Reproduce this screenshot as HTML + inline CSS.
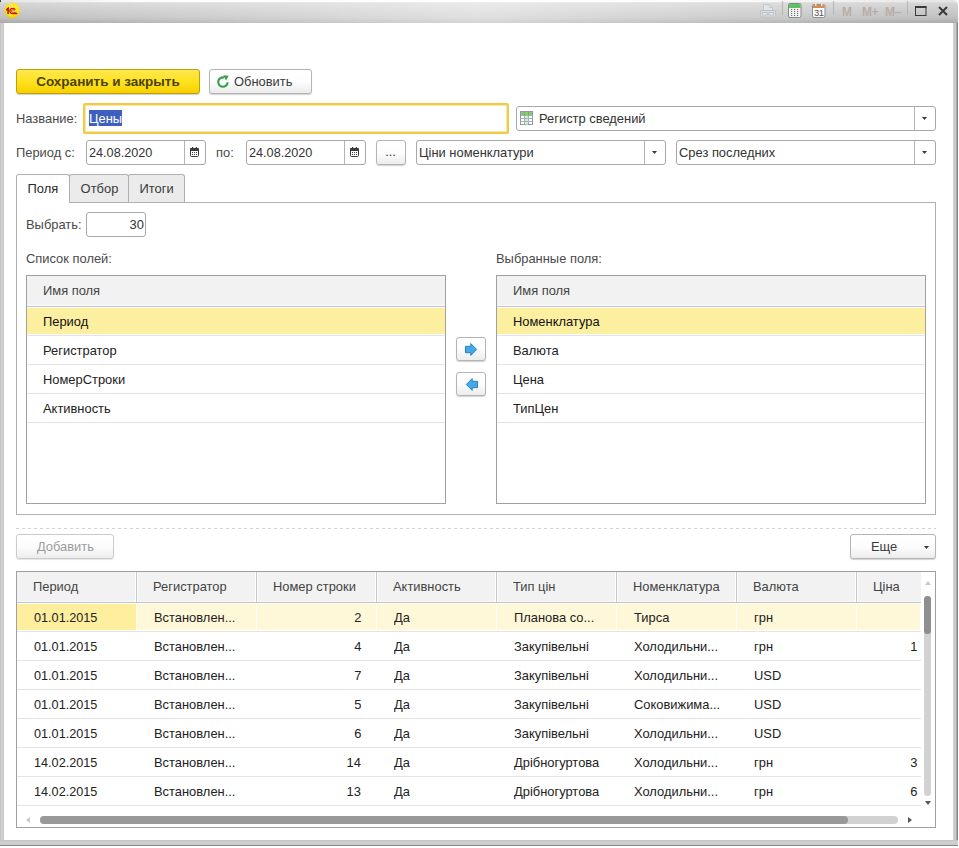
<!DOCTYPE html>
<html>
<head>
<meta charset="utf-8">
<style>
*{box-sizing:border-box;margin:0;padding:0}
html,body{width:959px;height:848px;overflow:hidden;background:#fff}
body{position:relative;font-family:"Liberation Sans",sans-serif;font-size:13.33px;color:#3a3a3a;line-height:16px}
.abs{position:absolute}
.t{display:inline-block;transform:scaleX(0.968);transform-origin:0 0;white-space:nowrap}
.t.n{transform:scaleX(.95)}
.r>.t{transform-origin:100% 0}
.c>.t{transform-origin:50% 0}
#titlebar{left:0;top:0;width:958px;height:23px;background:linear-gradient(90deg,rgba(255,255,255,0) 0,rgba(255,255,255,.5) 50%,rgba(255,255,255,.12) 85%,rgba(255,255,255,0) 100%),linear-gradient(#e4e4e4 0,#e2e2e2 2px,#d6d6d6 3px,#bfbfbf 18px,#b2b2b2 21px,#aaa 23px);border-top-right-radius:5px}
#tstrip{left:1px;top:0;width:954px;height:2px;background:linear-gradient(90deg,rgba(255,255,255,0) 0,rgba(255,255,255,.9) 14%,#fff 50%,rgba(255,255,255,.85) 76%,rgba(255,255,255,0) 100%)}
#bl{left:0;top:23px;width:4px;height:823px;background:linear-gradient(90deg,#c2c2c2,#cfcfcf 1.5px,#d0d0d0 3px,#c2c2c2 4px)}
#br{left:953px;top:23px;width:5px;height:823px;background:linear-gradient(90deg,#d2d2d2,#c6c6c6 3px,#8e8e8e 4px,#7c7c7c)}
#bb{left:0;top:840px;width:958px;height:6px;background:linear-gradient(#bebebe,#cecece 1.5px,#cdcdcd 4.5px,#8c8c8c 5px,#7e7e7e)}
.tsep{width:1px;height:14px;top:1px;background:#b6b6b6}
.mem{top:4px;font-weight:bold;font-size:12px;color:#b9ada6;letter-spacing:-0.5px}
.btn{border:1px solid #b4b4b4;border-radius:3px;background:linear-gradient(#ffffff,#fdfdfd 50%,#ececec);box-shadow:0 1px 1px rgba(0,0,0,.18);height:25px;text-align:center;line-height:23px;color:#3a3a3a;white-space:nowrap}
.btn.dis{color:#9c9c9c;border-color:#cbcbcb;box-shadow:0 1px 1px rgba(0,0,0,.10)}
#save{left:16px;top:69px;width:184px;background:linear-gradient(#ffe84f,#ffe21f 50%,#f6d000);border-color:#bd9f0a;color:#4a4205;font-weight:bold}
#save .t{transform:none;font-size:13.5px}
.inp{border:1px solid #a8a8a8;border-radius:3px;background:#fff;height:25px;line-height:23px;padding-left:2px;color:#333;white-space:nowrap;overflow:hidden}
.inp .dd{position:absolute;right:0;top:0;width:21px;height:23px;border-left:1px solid #b4b4b4}
.arr{position:absolute;width:5px;height:3px;background:#3a3a3a;clip-path:polygon(0 0,100% 0,50% 100%)}
.lbl{white-space:nowrap;color:#4a4a4a}
.tab{top:174px;height:29px;border:1px solid #b0b0b0;border-bottom:none;border-radius:3px 3px 0 0;background:#ebebeb;line-height:27px;text-align:center;color:#3a3a3a}
.tab.act{background:#fff;color:#2a2a2a}
.list{border:1px solid #a0a0a0;background:#fff;overflow:hidden}
.lh{position:absolute;left:0;top:0;right:0;height:31px;background:linear-gradient(#f2f2f2 29px,#fbfbfb 29px);border-bottom:1px solid #c4c4c4;line-height:30px;padding-left:16px;color:#444}
.lr{position:absolute;left:0;right:0;height:29px;border-bottom:1px solid #e4e4e4;line-height:29px;padding-left:16px;color:#222}
.lr.sel{color:#111}
.lr.sel:before{content:"";position:absolute;left:0;right:0;top:1px;height:26px;background:#fcefa0;z-index:0}
.lr .t{position:relative}
#grid{left:16px;top:571px;width:920px;height:257px;border:1px solid #a0a0a0;background:#fff;overflow:hidden}
.th{position:absolute;top:0;height:30px;background:linear-gradient(#f2f2f2 29px,#f9f9f9 29px);line-height:30px;padding-left:16px;color:#444;white-space:nowrap;overflow:hidden}
.vs{position:absolute;top:0;width:3px;height:30px;background:#fff}
.vs:after{content:"";position:absolute;left:1px;top:0;width:1px;height:30px;background:#c8c8c8}
.tr{position:absolute;left:0;width:904px;height:29px;border-bottom:1px solid #e4e4e4}
.td{position:absolute;top:0;height:29px;width:120px;line-height:29px;padding-left:17px;color:#222;white-space:nowrap;overflow:hidden}
.td.r{text-align:right;padding-left:0;padding-right:16px}
.selbg{position:absolute;top:1px;height:26px;background:#fff8d8}
</style>
</head>
<body>
<div class="abs" id="titlebar"></div>
<div class="abs" id="tstrip"></div>
<div class="abs" id="bl"></div>
<div class="abs" id="br"></div>
<div class="abs" id="bb"></div>
<div class="abs" style="left:0;top:0;width:1px;height:2px;background:#444"></div>

<svg class="abs" style="left:4px;top:2px" width="17" height="17" viewBox="0 0 17 17">
 <defs><radialGradient id="lg" cx="50%" cy="40%" r="60%"><stop offset="0" stop-color="#fff06a"/><stop offset=".7" stop-color="#ffe21a"/><stop offset="1" stop-color="#e8c020"/></radialGradient></defs>
 <circle cx="8.2" cy="8.6" r="7.8" fill="url(#lg)"/>
 <path d="M2.2 8 L4.1 6.5 V12" fill="none" stroke="#b5120c" stroke-width="1.6"/>
 <path d="M11.3 7.7 A2.9 2.6 0 1 0 8.9 11.6 H13.3" fill="none" stroke="#c8140c" stroke-width="1.3"/>
 <path d="M10.6 8.8 A1.6 1.3 0 1 0 9.3 10.3 H12.6" fill="none" stroke="#d02a10" stroke-width=".9"/>
</svg>

<svg class="abs" style="left:759px;top:3px" width="18" height="16" viewBox="0 0 18 16">
 <path d="M4.5 7 V1.5 H10.5 L13.5 4.5 V7" fill="#e2e5e8" stroke="#bfc5ca" stroke-width="1"/>
 <path d="M10.5 1.5 V4.5 H13.5" fill="none" stroke="#c3c8cc" stroke-width=".8"/>
 <rect x="1.5" y="7.5" width="15" height="6.5" rx="1.5" fill="#d8dcdf" stroke="#bcc2c7"/>
 <rect x="3.5" y="9.5" width="4.5" height="2.5" fill="#e4e7ea" stroke="#b9bfc4" stroke-width=".8"/>
 <rect x="10" y="9.5" width="4.5" height="2.5" fill="#e4e7ea" stroke="#b9bfc4" stroke-width=".8"/>
 <path d="M8 10.8 H10" stroke="#b9bfc4" stroke-width=".8"/>
</svg>
<div class="abs tsep" style="left:782px"></div>
<svg class="abs" style="left:788px;top:3px" width="14" height="15" viewBox="0 0 14 15">
 <rect x=".5" y=".5" width="12.5" height="14" rx="1.5" fill="#f4f6f6" stroke="#7f8c8c"/>
 <path d="M1 1.8 Q1 1 2 1 H11.5 Q12.5 1 12.5 1.8 V5 H1 Z" fill="#5fc263"/>
 <g fill="#5a646e"><rect x="3" y="6" width="1.2" height="1"/><rect x="6" y="6" width="1.2" height="1"/><rect x="3" y="8" width="1.2" height="1"/><rect x="6" y="8" width="1.2" height="1"/><rect x="3" y="10" width="1.2" height="1"/><rect x="6" y="10" width="1.2" height="1"/><rect x="9" y="10" width="1.2" height="1"/><rect x="3" y="12" width="1.2" height="1"/><rect x="6" y="12" width="1.2" height="1"/><rect x="9" y="12" width="1.2" height="1"/></g>
 <g fill="#d05040"><rect x="9" y="6" width="1.2" height="1"/><rect x="9" y="8" width="1.2" height="1"/></g>
</svg>
<svg class="abs" style="left:812px;top:2px" width="14" height="16" viewBox="0 0 14 16">
 <rect x=".5" y="2.5" width="12.5" height="13" rx="1.5" fill="#fbfbfb" stroke="#8a8f94"/>
 <path d="M1 3.8 Q1 3 2 3 H11.5 Q12.5 3 12.5 3.8 V6 H1 Z" fill="#d98a4c"/>
 <rect x="3" y="1" width="1.5" height="3" fill="#f4e0d0"/><rect x="9" y="1" width="1.5" height="3" fill="#f4e0d0"/>
 <text x="6.7" y="14" font-family="Liberation Sans" font-size="9.3" text-anchor="middle" fill="#555" letter-spacing="-0.4">31</text>
</svg>
<div class="abs tsep" style="left:833px"></div>
<div class="abs mem" style="left:842px">M</div>
<div class="abs mem" style="left:862px">M+</div>
<div class="abs mem" style="left:885px">M&#8211;</div>
<div class="abs tsep" style="left:907px"></div>
<svg class="abs" style="left:915px;top:6px" width="12" height="10" viewBox="0 0 12 10"><rect x=".5" y="1" width="10.5" height="8.5" fill="none" stroke="#3a3a3a" stroke-width="1"/><rect x="0" y="0" width="11.5" height="2" fill="#3a3a3a"/></svg>
<svg class="abs" style="left:938px;top:6px" width="10" height="10" viewBox="0 0 10 10"><path d="M1 1 L9 9 M9 1 L1 9" stroke="#3a3a3a" stroke-width="2"/></svg>

<div class="abs btn c" id="save"><span class="t ">Сохранить и закрыть</span></div>
<div class="abs btn" style="left:209px;top:69px;width:103px;text-align:left;padding-left:24px"><span class="t ">Обновить</span>
 <svg class="abs" style="left:6px;top:5px" width="14" height="14" viewBox="0 0 14 14"><path d="M11.6 7.2 A4.7 4.7 0 1 1 8.3 2.6" fill="none" stroke="#35a046" stroke-width="2.1"/><path d="M7.4 0.3 L12.6 0.8 L10 5.6 Z" fill="#35a046"/></svg>
</div>

<div class="abs lbl" style="left:16px;top:110.5px"><span class="t ">Название:</span></div>
<div class="abs" style="left:83px;top:103px;width:426px;height:31px;border:2px solid #f0ca48;border-radius:2px;background:#fff"></div>
<div class="abs" style="left:85px;top:105px;width:422px;height:27px;border:1px solid #f8e7a8;background:#fff"></div>
<div class="abs" style="left:89px;top:110px;width:33px;height:16px;background:#3f5fc0"></div>
<div class="abs" style="left:89px;top:110.5px;color:#fff"><span class="t ">Цены</span></div>

<div class="abs inp" style="left:516px;top:106px;width:420px;padding-left:22px"><span class="t ">Регистр сведений</span>
 <svg class="abs" style="left:3px;top:4px" width="13" height="14" viewBox="0 0 13 14"><rect x=".5" y=".5" width="12" height="13" fill="#fff" stroke="#8d9aa8"/><rect x="1" y="1" width="11" height="3.5" fill="#8cc873"/><rect x="5" y="4.5" width="3" height="9" fill="#d4ecc9"/><path d="M1 4.5 H12 M1 7.5 H12 M1 10.5 H12 M4.5 1 V13 M8.5 1 V13" stroke="#a3b3be" stroke-width="1"/><path d="M4.5 1 V4.5 M8.5 1 V4.5" stroke="#6fb257" stroke-width="1"/></svg>
 <div class="dd"><div class="arr" style="left:7px;top:10px"></div></div>
</div>

<div class="abs lbl" style="left:16px;top:144.5px"><span class="t ">Период с:</span></div>
<div class="abs inp" style="left:86px;top:140px;width:120px"><span class="t  n">24.08.2020</span>
 <div class="dd"><svg class="abs" style="left:5px;top:6px" width="9" height="10" viewBox="0 0 9 10"><rect x=".5" y="1.5" width="8" height="8" rx="1" fill="#fff" stroke="#3c3c3c"/><rect x="0" y="1" width="9" height="3" rx="1" fill="#3c3c3c"/><rect x="2" y="0" width="1.2" height="2" fill="#3c3c3c"/><rect x="5.8" y="0" width="1.2" height="2" fill="#3c3c3c"/><g fill="#3c3c3c"><rect x="2" y="5" width="1" height="1"/><rect x="4" y="5" width="1" height="1"/><rect x="6" y="5" width="1" height="1"/><rect x="2" y="7" width="1" height="1"/><rect x="4" y="7" width="1" height="1"/><rect x="6" y="7" width="1" height="1"/></g></svg></div>
</div>
<div class="abs lbl" style="left:216px;top:144.5px"><span class="t ">по:</span></div>
<div class="abs inp" style="left:246px;top:140px;width:120px"><span class="t  n">24.08.2020</span>
 <div class="dd"><svg class="abs" style="left:5px;top:6px" width="9" height="10" viewBox="0 0 9 10"><rect x=".5" y="1.5" width="8" height="8" rx="1" fill="#fff" stroke="#3c3c3c"/><rect x="0" y="1" width="9" height="3" rx="1" fill="#3c3c3c"/><rect x="2" y="0" width="1.2" height="2" fill="#3c3c3c"/><rect x="5.8" y="0" width="1.2" height="2" fill="#3c3c3c"/><g fill="#3c3c3c"><rect x="2" y="5" width="1" height="1"/><rect x="4" y="5" width="1" height="1"/><rect x="6" y="5" width="1" height="1"/><rect x="2" y="7" width="1" height="1"/><rect x="4" y="7" width="1" height="1"/><rect x="6" y="7" width="1" height="1"/></g></svg></div>
</div>
<div class="abs btn c" style="left:376px;top:140px;width:30px;height:25px;line-height:21px"><span class="t ">...</span></div>
<div class="abs inp" style="left:416px;top:140px;width:250px"><span class="t ">Ціни номенклатури</span>
 <div class="dd"><div class="arr" style="left:7px;top:10px"></div></div>
</div>
<div class="abs inp" style="left:676px;top:140px;width:260px"><span class="t ">Срез последних</span>
 <div class="dd"><div class="arr" style="left:7px;top:10px"></div></div>
</div>

<div class="abs" style="left:16px;top:202px;width:920px;height:313px;border:1px solid #b0b0b0;background:#fff"></div>
<div class="abs tab act c" style="left:16px;width:54px"><span class="t ">Поля</span></div>
<div class="abs" style="left:17px;top:202px;width:52px;height:1px;background:#fff"></div>
<div class="abs tab c" style="left:69px;width:60px;height:28px"><span class="t ">Отбор</span></div>
<div class="abs tab c" style="left:128px;width:57px;height:28px"><span class="t ">Итоги</span></div>

<div class="abs lbl" style="left:26px;top:217px"><span class="t ">Выбрать:</span></div>
<div class="abs inp r" style="left:86px;top:212px;width:60px;text-align:right;padding-right:1px"><span class="t ">30</span></div>
<div class="abs lbl" style="left:26px;top:251px"><span class="t ">Список полей:</span></div>
<div class="abs lbl" style="left:496px;top:251px"><span class="t ">Выбранные поля:</span></div>

<div class="abs list" style="left:26px;top:275px;width:420px;height:229px">
 <div class="lh"><span class="t ">Имя поля</span></div>
 <div class="lr sel" style="top:31px"><span class="t ">Период</span></div>
 <div class="lr" style="top:60px"><span class="t ">Регистратор</span></div>
 <div class="lr" style="top:89px"><span class="t ">НомерСтроки</span></div>
 <div class="lr" style="top:118px"><span class="t ">Активность</span></div>
</div>
<div class="abs list" style="left:496px;top:275px;width:430px;height:229px">
 <div class="lh"><span class="t ">Имя поля</span></div>
 <div class="lr sel" style="top:31px"><span class="t ">Номенклатура</span></div>
 <div class="lr" style="top:60px"><span class="t ">Валюта</span></div>
 <div class="lr" style="top:89px"><span class="t ">Цена</span></div>
 <div class="lr" style="top:118px"><span class="t ">ТипЦен</span></div>
</div>

<div class="abs btn" style="left:456px;top:337px;width:30px;height:24px">
 <svg class="abs" style="left:7px;top:4px" width="15" height="15" viewBox="0 0 15 15"><path d="M1.5 4.3 H6.8 V1.6 L12.7 7.5 L6.8 13.4 V10.7 H1.5 Z" fill="#43aaea" stroke="#2a7ec2" stroke-width="1" stroke-linejoin="round"/></svg>
</div>
<div class="abs btn" style="left:456px;top:372px;width:30px;height:24px">
 <svg class="abs" style="left:7px;top:4px" width="15" height="15" viewBox="0 0 15 15"><path d="M13.5 4.3 H8.2 V1.6 L2.3 7.5 L8.2 13.4 V10.7 H13.5 Z" fill="#43aaea" stroke="#2a7ec2" stroke-width="1" stroke-linejoin="round"/></svg>
</div>

<div class="abs" style="left:16px;top:528px;width:920px;height:1px;background:repeating-linear-gradient(90deg,#d4d4d4 0,#d4d4d4 3px,transparent 3px,transparent 6px)"></div>
<div class="abs btn dis c" style="left:16px;top:534px;width:98px"><span class="t ">Добавить</span></div>
<div class="abs btn" style="left:850px;top:534px;width:86px;text-align:left;padding-left:20px"><span class="t ">Еще</span><div class="arr" style="left:73px;top:11px"></div></div>
<div class="abs" id="grid">
 <div class="th" style="left:0px;width:120px"><span class="t ">Период</span></div>
 <div class="th" style="left:120px;width:120px"><span class="t ">Регистратор</span></div>
 <div class="th" style="left:240px;width:120px"><span class="t ">Номер строки</span></div>
 <div class="th" style="left:360px;width:120px"><span class="t ">Активность</span></div>
 <div class="th" style="left:480px;width:120px"><span class="t ">Тип цін</span></div>
 <div class="th" style="left:600px;width:120px"><span class="t ">Номенклатура</span></div>
 <div class="th" style="left:720px;width:120px"><span class="t ">Валюта</span></div>
 <div class="th" style="left:840px;width:64px"><span class="t ">Ціна</span></div>
 <div class="abs" style="left:0;top:30px;width:904px;height:1px;background:#c4c4c4"></div>
 <div class="vs" style="left:118px"></div>
 <div class="vs" style="left:238px"></div>
 <div class="vs" style="left:358px"></div>
 <div class="vs" style="left:478px"></div>
 <div class="vs" style="left:598px"></div>
 <div class="vs" style="left:718px"></div>
 <div class="vs" style="left:838px"></div>
 <div class="tr" style="top:31px"><div class="selbg" style="left:0;width:119px;background:#fdef9e"></div><div class="selbg" style="left:120px;width:119px"></div><div class="selbg" style="left:240px;width:119px"></div><div class="selbg" style="left:360px;width:119px"></div><div class="selbg" style="left:480px;width:119px"></div><div class="selbg" style="left:600px;width:119px"></div><div class="selbg" style="left:720px;width:119px"></div><div class="selbg" style="left:840px;width:63px"></div><div class="td" style="left:0px"><span class="t  n">01.01.2015</span></div><div class="td" style="left:120px"><span class="t ">Встановлен...</span></div><div class="td r" style="left:240px"><span class="t ">2</span></div><div class="td" style="left:360px"><span class="t ">Да</span></div><div class="td" style="left:480px"><span class="t ">Планова со...</span></div><div class="td" style="left:600px"><span class="t ">Тирса</span></div><div class="td" style="left:720px"><span class="t ">грн</span></div></div>
 <div class="tr" style="top:60px"><div class="td" style="left:0px"><span class="t  n">01.01.2015</span></div><div class="td" style="left:120px"><span class="t ">Встановлен...</span></div><div class="td r" style="left:240px"><span class="t ">4</span></div><div class="td" style="left:360px"><span class="t ">Да</span></div><div class="td" style="left:480px"><span class="t ">Закупівельні</span></div><div class="td" style="left:600px"><span class="t ">Холодильни...</span></div><div class="td" style="left:720px"><span class="t ">грн</span></div><div class="td r" style="left:840px;width:64px;padding-right:4px"><span class="t ">1</span></div></div>
 <div class="tr" style="top:89px"><div class="td" style="left:0px"><span class="t  n">01.01.2015</span></div><div class="td" style="left:120px"><span class="t ">Встановлен...</span></div><div class="td r" style="left:240px"><span class="t ">7</span></div><div class="td" style="left:360px"><span class="t ">Да</span></div><div class="td" style="left:480px"><span class="t ">Закупівельні</span></div><div class="td" style="left:600px"><span class="t ">Холодильни...</span></div><div class="td" style="left:720px"><span class="t ">USD</span></div></div>
 <div class="tr" style="top:118px"><div class="td" style="left:0px"><span class="t  n">01.01.2015</span></div><div class="td" style="left:120px"><span class="t ">Встановлен...</span></div><div class="td r" style="left:240px"><span class="t ">5</span></div><div class="td" style="left:360px"><span class="t ">Да</span></div><div class="td" style="left:480px"><span class="t ">Закупівельні</span></div><div class="td" style="left:600px"><span class="t ">Соковижима...</span></div><div class="td" style="left:720px"><span class="t ">USD</span></div></div>
 <div class="tr" style="top:147px"><div class="td" style="left:0px"><span class="t  n">01.01.2015</span></div><div class="td" style="left:120px"><span class="t ">Встановлен...</span></div><div class="td r" style="left:240px"><span class="t ">6</span></div><div class="td" style="left:360px"><span class="t ">Да</span></div><div class="td" style="left:480px"><span class="t ">Закупівельні</span></div><div class="td" style="left:600px"><span class="t ">Холодильни...</span></div><div class="td" style="left:720px"><span class="t ">USD</span></div></div>
 <div class="tr" style="top:176px"><div class="td" style="left:0px"><span class="t  n">14.02.2015</span></div><div class="td" style="left:120px"><span class="t ">Встановлен...</span></div><div class="td r" style="left:240px"><span class="t ">14</span></div><div class="td" style="left:360px"><span class="t ">Да</span></div><div class="td" style="left:480px"><span class="t ">Дрібногуртова</span></div><div class="td" style="left:600px"><span class="t ">Холодильни...</span></div><div class="td" style="left:720px"><span class="t ">грн</span></div><div class="td r" style="left:840px;width:64px;padding-right:4px"><span class="t ">3</span></div></div>
 <div class="tr" style="top:205px"><div class="td" style="left:0px"><span class="t  n">14.02.2015</span></div><div class="td" style="left:120px"><span class="t ">Встановлен...</span></div><div class="td r" style="left:240px"><span class="t ">13</span></div><div class="td" style="left:360px"><span class="t ">Да</span></div><div class="td" style="left:480px"><span class="t ">Дрібногуртова</span></div><div class="td" style="left:600px"><span class="t ">Холодильни...</span></div><div class="td" style="left:720px"><span class="t ">грн</span></div><div class="td r" style="left:840px;width:64px;padding-right:4px"><span class="t ">6</span></div></div>

 <div class="abs" style="left:908px;top:9px;width:0;height:0;border-left:3px solid transparent;border-right:3px solid transparent;border-bottom:4px solid #c8c8c8"></div>
 <div class="abs" style="left:907px;top:24px;width:7px;height:200px;border-radius:4px;background:#d2d2d2"></div>
 <div class="abs" style="left:907px;top:24px;width:7px;height:38px;border-radius:4px;background:#8e8e8e"></div>
 <div class="abs" style="left:908px;top:229px;width:0;height:0;border-left:3px solid transparent;border-right:3px solid transparent;border-top:4px solid #555"></div>
 <div class="abs" style="left:9px;top:245px;width:0;height:0;border-top:3px solid transparent;border-bottom:3px solid transparent;border-right:4px solid #c8c8c8"></div>
 <div class="abs" style="left:23px;top:244px;width:858px;height:8px;border-radius:4px;background:#d2d2d2"></div>
 <div class="abs" style="left:23px;top:244px;width:808px;height:8px;border-radius:4px;background:#999"></div>
 <div class="abs" style="left:891px;top:245px;width:0;height:0;border-top:3px solid transparent;border-bottom:3px solid transparent;border-left:4px solid #555"></div>
</div>
</body>
</html>
